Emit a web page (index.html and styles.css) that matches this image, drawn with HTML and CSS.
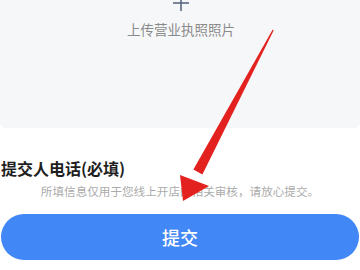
FILE: index.html
```html
<!DOCTYPE html>
<html lang="zh-CN">
<head>
<meta charset="utf-8">
<title>提交</title>
<link rel="stylesheet" href="styles.css">
</head>
<body>
<div class="page">
  <div class="upload">
    <svg class="plus" width="16" height="16" viewBox="0 0 16 16">
      <rect x="0" y="7.2" width="16" height="1.6" fill="#5d6981"/>
      <rect x="7.2" y="0" width="1.6" height="16" fill="#5d6981"/>
    </svg>
    <div class="upload-text">上传营业执照照片</div>
  </div>
  <div class="form">
    <div class="label">提交人电话(必填)</div>
    <div class="note">所填信息仅用于您线上开店的相关审核，请放心提交。</div>
    <button class="submit">提交</button>
  </div>
  <svg class="arrow" width="360" height="270" viewBox="0 0 360 270">
    <polygon points="272.7,29.6 273.6,30.4 202.4,174.4 193.4,169.6" fill="#e3221f"/>
    <polygon points="183,201 180,175 209,186" fill="#e3221f"/>
  </svg>
</div>
</body>
</html>
```
FILE: styles.css
```css
html, body {
  margin: 0;
  padding: 0;
  background: #ffffff;
}
body {
  width: 360px;
  height: 270px;
  overflow: hidden;
  font-family: "Noto Sans CJK SC", "Noto Sans", sans-serif;
}
.page {
  position: relative;
  display: flow-root;
  width: 360px;
  height: 270px;
}
.upload {
  margin-top: -40px;
  height: 168px;
  box-sizing: border-box;
  padding-top: 35px;
  background: #f6f7f9;
  border-radius: 6px;
  display: flex;
  flex-direction: column;
  align-items: center;
}
.plus {
  display: block;
  margin-left: 2px;
}
.upload-text {
  margin-top: 9px;
  margin-left: 2px;
  font-size: 13.5px;
  line-height: 18px;
  color: #8a8a8a;
}
.form {
  display: flex;
  flex-direction: column;
}
.label {
  margin-top: 29px;
  padding-left: 1px;
  font-size: 16px;
  line-height: 22px;
  font-weight: 700;
  color: #1f1f1f;
}
.note {
  margin-top: 4px;
  font-size: 11.6px;
  line-height: 16px;
  color: #ababab;
  text-align: center;
}
.submit {
  margin: 15px 1px 0 1px;
  height: 46px;
  border: none;
  border-radius: 23px;
  background: #4287f6;
  color: #ffffff;
  font-family: "Noto Sans CJK SC", "Noto Sans", sans-serif;
  font-size: 18px;
  font-weight: 500;
  padding: 0;
}
.arrow {
  position: absolute;
  left: 0;
  top: 0;
  pointer-events: none;
}
```
